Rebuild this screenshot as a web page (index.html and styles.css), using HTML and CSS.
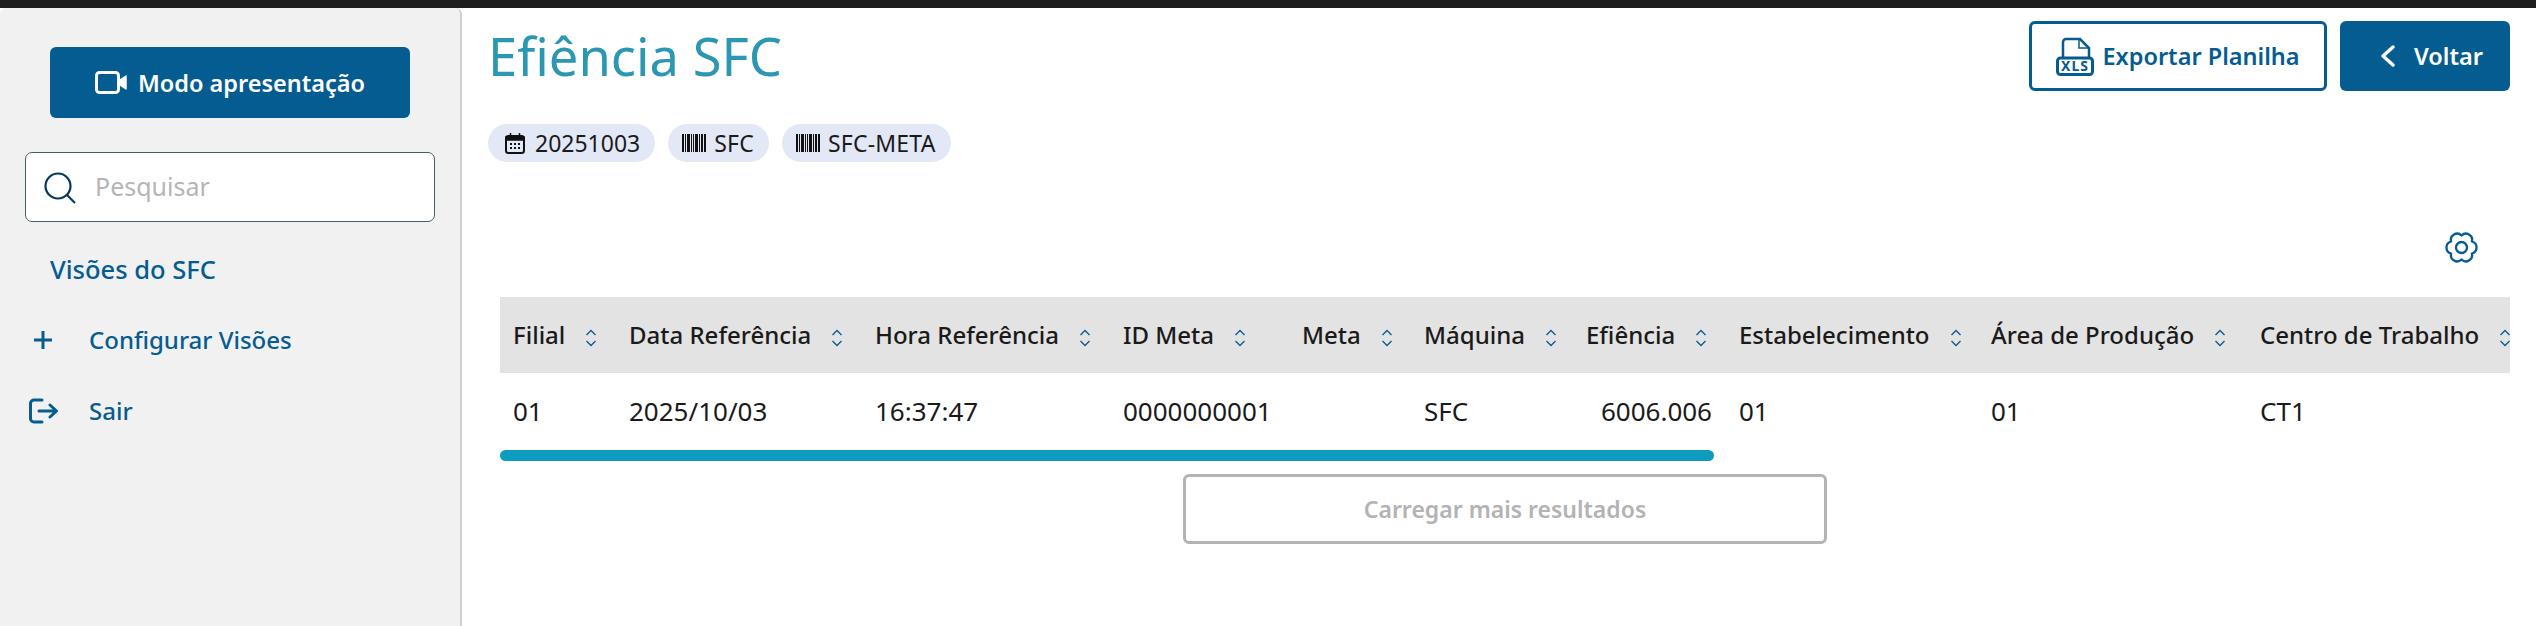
FILE: index.html
```html
<!DOCTYPE html>
<html lang="pt-BR">
<head>
<meta charset="utf-8">
<title>Efiência SFC</title>
<link rel="stylesheet" href="styles.css">
</head>
<body>
<svg class="defs" width="0" height="0" aria-hidden="true">
  <symbol id="sort" viewBox="0 0 12 18"><path d="M1.500 6 6 1.500 10.500 6M1.500 12 6 16.500 10.500 12" fill="none" stroke="#055c91" stroke-width="1.300"/></symbol>
  <symbol id="barcode" viewBox="0 0 24 18"><path fill="#111" d="M0 0h2v18H0zM3 0h1v18H3zM5 0h3v18H5zM9 0h1v18H9zM11 0h1v18h-1zM13 0h3v18h-3zM17 0h1v18h-1zM19 0h2v18h-2zM22 0h2v18h-2z"/></symbol>
</svg>
<div class="topbar"></div>
<div class="app">
  <aside class="sidebar">
    <button class="btn btn-primary present">
      <svg class="ico-video" viewBox="0 0 33 23"><rect x="1.500" y="1.500" width="22" height="20" rx="3" fill="none" stroke="#fff" stroke-width="3"/><path d="M25 9l6-4v13l-6-4z" fill="#fff" stroke="#fff" stroke-width="1.500" stroke-linejoin="round"/></svg>
      Modo apresentação
    </button>
    <div class="search">
      <svg class="ico-search" viewBox="0 0 32 32"><circle cx="14" cy="14" r="12.500" fill="none" stroke="#043a5c" stroke-width="2.200"/><path d="M23 23l8 8" stroke="#043a5c" stroke-width="2.200"/></svg>
      <span class="placeholder">Pesquisar</span>
    </div>
    <nav class="nav">
      <a class="nav-item nav-plain">Visões do SFC</a>
      <a class="nav-item"><span class="nav-ico"><svg class="ico-plus" viewBox="0 0 20 20"><path d="M10 1v18M1 10h18" stroke="#055c91" stroke-width="3"/></svg></span>Configurar Visões</a>
      <a class="nav-item"><span class="nav-ico"><svg class="ico-exit" viewBox="0 0 30 26"><path d="M13 2H5a3.500 3.500 0 0 0-3.500 3.500v15A3.500 3.500 0 0 0 5 24h8M10 13h17M21 7l6.500 6-6.500 6" fill="none" stroke="#055c91" stroke-width="3" stroke-linecap="round" stroke-linejoin="round"/></svg></span>Sair</a>
    </nav>
  </aside>
  <main class="main">
    <header class="head">
      <h1 class="title">Efiência SFC</h1>
      <div class="actions">
        <button class="btn btn-outline export">
          <svg class="ico-xls" viewBox="0 0 38 39"><path d="M7 20V5a3 3 0 0 1 3-3h14l9 9v9" fill="none" stroke="#055c91" stroke-width="2.500"/><path d="M23 2v9h10" fill="none" stroke="#055c91" stroke-width="1.500"/><rect x="1.500" y="21" width="35" height="16.500" rx="3" fill="#fff" stroke="#055c91" stroke-width="3"/><text x="19" y="34" text-anchor="middle" class="xls-text">XLS</text></svg>
          Exportar Planilha
        </button>
        <button class="btn btn-primary back">
          <svg class="ico-back" viewBox="0 0 16 24"><path d="M13 3 3 12l10 9" fill="none" stroke="#fff" stroke-width="3.500" stroke-linecap="round" stroke-linejoin="round"/></svg>
          Voltar
        </button>
      </div>
    </header>
    <div class="chips">
      <span class="chip chip-date"><svg class="ico-cal" viewBox="0 0 20 21"><rect x="1" y="3" width="18" height="17" rx="2.500" fill="none" stroke="#111" stroke-width="2"/><path d="M1 7h18V4H1zM5.500 0v4M14.500 0v4" fill="#111" stroke="#111" stroke-width="1.500"/><path d="M5 10h2v2H5zM9 10h2v2H9zM13 10h2v2h-2zM5 14h2v2H5zM9 14h2v2H9zM13 14h2v2h-2z" fill="#111"/></svg>20251003</span>
      <span class="chip"><svg class="ico-bar"><use href="#barcode"/></svg>SFC</span>
      <span class="chip"><svg class="ico-bar"><use href="#barcode"/></svg>SFC-META</span>
    </div>
    <div class="tools">
      <svg class="ico-gear" viewBox="0 0 33 31"><path d="M16.500 3.500A6.200 6.200 0 0 1 26.890 9.500 6.200 6.200 0 0 1 26.890 21.500 6.200 6.200 0 0 1 16.500 27.500 6.200 6.200 0 0 1 6.110 21.500 6.200 6.200 0 0 1 6.110 9.500 6.200 6.200 0 0 1 16.500 3.500Z" fill="none" stroke="#055c91" stroke-width="2.300" stroke-linejoin="round"/><circle cx="16.500" cy="15.500" r="5.500" fill="none" stroke="#055c91" stroke-width="2.300"/></svg>
    </div>
    <div class="table-wrap">
      <table class="grid">
        <colgroup>
          <col class="c1"><col class="c2"><col class="c3"><col class="c4"><col class="c5"><col class="c6"><col class="c7"><col class="c8"><col class="c9"><col class="c10">
        </colgroup>
        <thead>
          <tr>
            <th>Filial<svg class="sort"><use href="#sort"/></svg></th>
            <th>Data Referência<svg class="sort"><use href="#sort"/></svg></th>
            <th>Hora Referência<svg class="sort"><use href="#sort"/></svg></th>
            <th>ID Meta<svg class="sort"><use href="#sort"/></svg></th>
            <th>Meta<svg class="sort"><use href="#sort"/></svg></th>
            <th>Máquina<svg class="sort"><use href="#sort"/></svg></th>
            <th>Efiência<svg class="sort"><use href="#sort"/></svg></th>
            <th>Estabelecimento<svg class="sort"><use href="#sort"/></svg></th>
            <th>Área de Produção<svg class="sort"><use href="#sort"/></svg></th>
            <th>Centro de Trabalho<svg class="sort"><use href="#sort"/></svg></th>
          </tr>
        </thead>
        <tbody>
          <tr>
            <td>01</td><td>2025/10/03</td><td>16:37:47</td><td>0000000001</td><td></td><td>SFC</td><td class="num">6006.006</td><td>01</td><td>01</td><td>CT1</td>
          </tr>
        </tbody>
      </table>
      <div class="scroll"><div class="thumb"></div></div>
      <div class="more"><button class="btn btn-disabled">Carregar mais resultados</button></div>
    </div>
  </main>
</div>
</body>
</html>
```

FILE: styles.css
```css
* { box-sizing: border-box; }
html, body { margin: 0; height: 100%; overflow: hidden; background: #fff; }
body { font-family: "Noto Sans", "Lato", sans-serif; color: #1a1a1a; }
.defs { position: absolute; }
.topbar { height: 8px; background: #1e1e1e; }
.app { display: flex; height: 618px; }

.sidebar { width: 462px; flex: none; background: #f1f1f1; border-right: 2px solid #cfcfcf; border-radius: 6px 6px 0 0; padding: 39px 25px 0 25px; }
.btn { font-family: inherit; display: flex; align-items: center; justify-content: center; border-radius: 6px; height: 70px; font-size: 23.500px; font-weight: 600; border: 0; padding: 0; }
.btn-primary { background: #055c91; color: #fff; }
.present { width: 360px; height: 71px; margin-left: 25px; gap: 10px; }
.ico-video { width: 33px; height: 23px; }
.search { margin-top: 34px; width: 410px; height: 70px; background: #fff; border: 1.500px solid #4a5c66; border-radius: 7px; display: flex; align-items: center; padding-left: 18px; gap: 19px; }
.ico-search { width: 32px; height: 32px; margin-top: 2px; }
.placeholder { font-size: 25px; color: #b5b5b5; padding-bottom: 2px; }
.nav { margin-top: 11px; display: flex; flex-direction: column; }
.nav-item { height: 71px; display: flex; align-items: center; color: #055c91; font-size: 24px; font-weight: 500; }
.nav-plain { padding-left: 25px; font-size: 25.500px; }
.nav-ico { width: 64px; padding-left: 4px; display: flex; align-items: center; }
.ico-plus { width: 20px; height: 20px; margin-left: 4px; }
.ico-exit { width: 30px; height: 26px; }

.main { flex: 1; min-width: 0; padding: 13px 26px 0; }
.head { display: flex; justify-content: space-between; align-items: flex-start; }
.title { margin: 0; height: 70px; line-height: 70px; font-size: 52.500px; font-weight: 400; color: #2b97b2; }
.actions { display: flex; gap: 13px; }
.btn-outline { width: 298px; background: #fff; color: #055c91; border: 3px solid #055c91; gap: 8px; }
.ico-xls { width: 38px; height: 39px; }
.xls-text { font-size: 14px; font-weight: 700; fill: #055c91; letter-spacing: 1px; }
.back { width: 170px; gap: 18px; padding-left: 13px; }
.ico-back { width: 16px; height: 24px; }

.chips { margin-top: 33px; display: flex; gap: 13px; }
.chip { height: 38px; border-radius: 19px; background: #e3e8f6; display: inline-flex; align-items: center; padding: 0 15px 0 14px; gap: 8px; font-size: 23px; letter-spacing: .2px; color: #1a1a1a; }
.chip-date { padding-left: 17px; gap: 10px; letter-spacing: 0; }
.ico-cal { width: 20px; height: 21px; }
.ico-bar { width: 24px; height: 18px; }

.tools { margin-top: 70px; height: 33px; display: flex; justify-content: flex-end; padding-right: 32px; }
.ico-gear { width: 33px; height: 31px; }

.table-wrap { margin: 32px 0 0 12px; width: 2010px; overflow: hidden; }
.grid { table-layout: fixed; border-collapse: collapse; width: 2010px; font-size: 26px; }
.c1 { width: 116px; } .c2 { width: 246px; } .c3 { width: 248px; } .c4 { width: 179px; } .c5 { width: 122px; }
.c6 { width: 162px; } .c7 { width: 153px; } .c8 { width: 252px; } .c9 { width: 269px; } .c10 { width: 263px; }
.grid th { height: 76px; background: #e3e3e3; font-size: 24px; font-weight: 500; text-align: left; padding: 0 0 2px 13px; white-space: nowrap; overflow: hidden; }
.grid td { height: 77px; padding: 0 14px 2px 13px; white-space: nowrap; font-weight: 400; }
.grid .num { text-align: right; }
.sort { width: 12px; height: 18px; margin-left: 20px; vertical-align: -3px; }
.scroll { height: 11px; }
.thumb { width: 1214px; height: 11px; border-radius: 6px; background: #0e9bc0; }
.more { margin-top: 13px; display: flex; justify-content: center; }
.btn-disabled { width: 644px; background: #fff; color: #b3b3b3; border: 3px solid #b3b3b3; font-size: 23px; }
```
